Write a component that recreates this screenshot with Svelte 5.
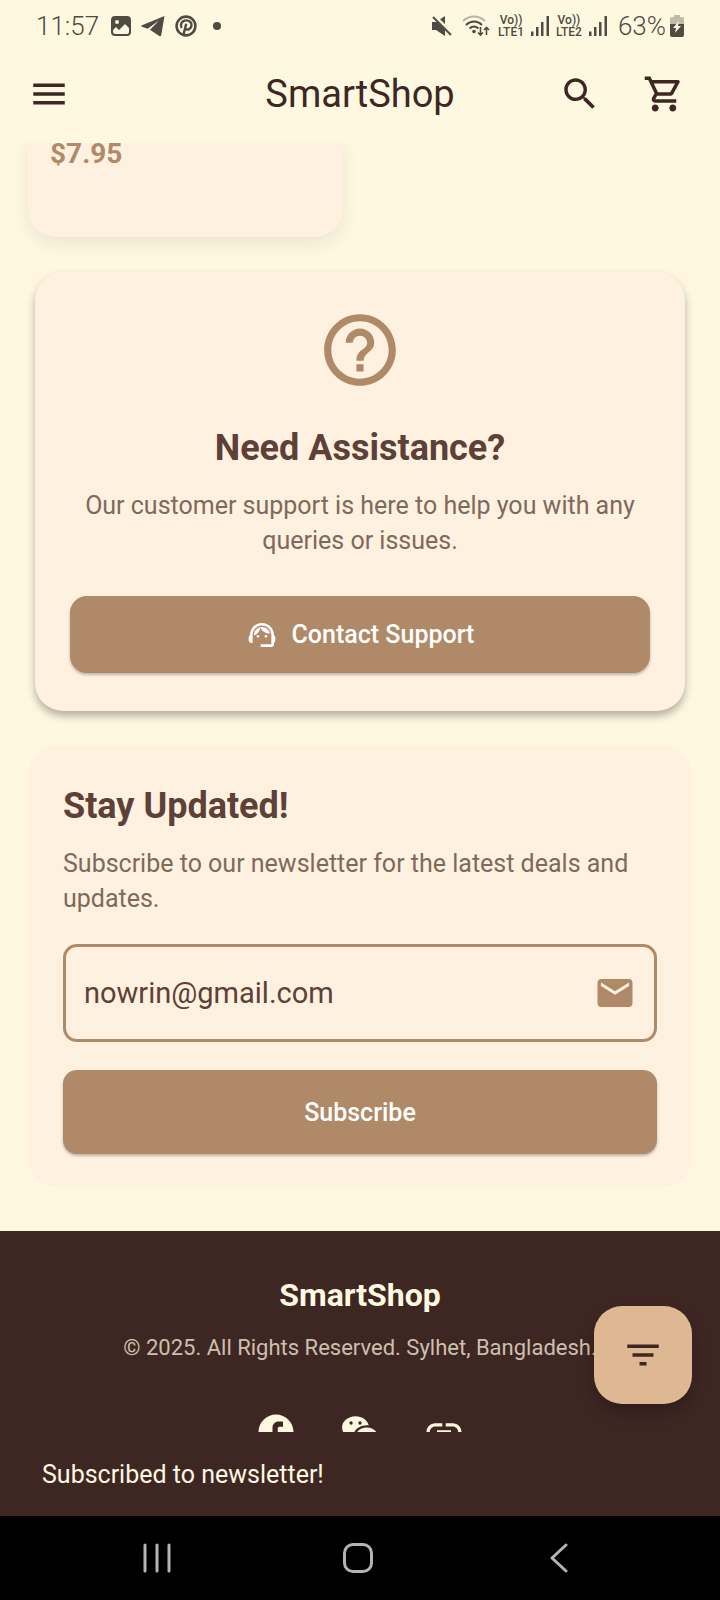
<script>
  let email = $state('nowrin@gmail.com');

  const socials = [
    {
      name: 'Facebook',
      path: 'M22 12c0-5.52-4.48-10-10-10S2 6.48 2 12c0 4.84 3.44 8.87 8 9.8V15H8v-3h2V9.5C10 7.57 11.57 6 13.5 6H16v3h-2c-.55 0-1 .45-1 1v2h3v3h-3v6.95c5.05-.5 9-4.76 9-9.95z'
    },
    {
      name: 'WeChat',
      path: 'M15.85 8.14c.39 0 .77.03 1.14.08C16.31 5.25 13.19 3 9.44 3c-4.25 0-7.7 2.88-7.7 6.43 0 2.05 1.15 3.86 2.94 5.04L3.67 16.5l2.76-1.19c.59.21 1.21.38 1.87.47-.09-.39-.14-.79-.14-1.21 0-3.55 3.45-6.43 7.69-6.43zM12 5.89a.96.96 0 1 1 0 1.93.96.96 0 0 1 0-1.93zM6.88 7.82a.96.96 0 1 1 0-1.93.96.96 0 0 1 0 1.93zM22.26 14.57c0-2.84-2.87-5.14-6.41-5.14s-6.41 2.3-6.41 5.14 2.87 5.14 6.41 5.14c.58 0 1.14-.08 1.67-.2l2.44.99-.96-1.53c1.56-.92 3.26-2.55 3.26-4.4z'
    },
    {
      name: 'Website link',
      path: 'M3.9 12c0-1.71 1.39-3.1 3.1-3.1h4V7H7c-2.76 0-5 2.24-5 5s2.24 5 5 5h4v-1.9H7c-1.71 0-3.1-1.39-3.1-3.1zM8 13h8v-2H8v2zm9-6h-4v1.9h4c1.71 0 3.1 1.39 3.1 3.1s-1.39 3.1-3.1 3.1h-4V17h4c2.76 0 5-2.24 5-5s-2.24-5-5-5z'
    }
  ];
</script>

{#snippet signal(label)}
  <span class="lte"><span>Vo))</span><span>{label}</span></span>
  <svg width="20" height="22" viewBox="0 0 20 22" aria-hidden="true">
    <path d="M1 16.500h2.500v4.500H1zM6 12h2.500v9H6zM11 7h2.500v14H11zM16.500 1H19v20h-2.500z" />
  </svg>
{/snippet}

<div class="app">
  <div class="status">
    <div class="status-group left">
      <span class="clock">11:57</span>
      <svg width="20" height="20" viewBox="0 0 20 20" aria-hidden="true">
        <path fill-rule="evenodd" d="M4 0h12a4 4 0 0 1 4 4v12a4 4 0 0 1-4 4H4a4 4 0 0 1-4-4V4a4 4 0 0 1 4-4zM2 14v2a2 2 0 0 0 2 2h12a2 2 0 0 0 2-2v-4l-4-4-6 6-3-3zM6 4a2 2 0 1 0 0 4 2 2 0 0 0 0-4z" />
      </svg>
      <svg width="24" height="22" viewBox="0 0 24 22" aria-hidden="true">
        <path d="M23.5 1 1 10.2c-1 .4-1 1.2 0 1.6l5.6 1.9L18 5.5l-9 9.3 9.3 6.3c.9.5 1.6.2 1.9-.8z" />
      </svg>
      <svg width="22" height="22" viewBox="0 0 22 22" aria-hidden="true">
        <circle cx="11" cy="11" r="9.4" fill="none" stroke="currentColor" stroke-width="2.6" />
        <path d="M6.6 12.8C4.7 9.6 6.8 5.4 11.3 5.4c3.4 0 5.4 2.1 5.2 4.9-.2 3.7-3.9 5.3-5.9 3.500M11.2 8.800 8.200 21" fill="none" stroke="currentColor" stroke-width="2.400" />
      </svg>
      <span class="dot"></span>
    </div>
    <div class="status-group right">
      <svg width="20" height="22" viewBox="0 0 20 22" aria-hidden="true">
        <path d="M0 7h4l9-6v20l-9-6H0z" />
        <path d="M1 0 20 19" stroke="#fff8e1" stroke-width="4" />
        <path d="M1 2 19 20" stroke="currentColor" stroke-width="2" />
      </svg>
      <svg class="wifi" width="28" height="22" viewBox="0 0 28 22" aria-hidden="true">
        <g fill="none" stroke="currentColor" stroke-width="2">
          <path d="M1 6c6.500-6 15.500-6 22 0" opacity=".4" />
          <path d="M4 10c4.800-4.600 11.200-4.600 16 0M7.500 13.500c2.800-2.500 6.200-2.500 9 0" />
          <path d="M18.500 12v8M16 17.500l2.500 2.500 2.500-2.500M24.500 20v-7M22 15l2.500-2.500L27 15" stroke-width="1.600" />
        </g>
        <circle cx="12" cy="16.500" r="1.800" />
      </svg>
      {@render signal('LTE1')}
      {@render signal('LTE2')}
      <span class="battery">
        63%
        <svg width="14" height="22" viewBox="0 0 14 22" aria-hidden="true">
          <path d="M4 0h6v2h2a2 2 0 0 1 2 2v7H0V4a2 2 0 0 1 2-2h2z" opacity=".35" />
          <path d="M0 9h14v11a2 2 0 0 1-2 2H2a2 2 0 0 1-2-2z" />
          <path d="M9 6 3 13h3l-1 5 6-7H8z" fill="#fff8e1" />
        </svg>
      </span>
    </div>
  </div>

  <header class="appbar">
    <button class="icon-btn" aria-label="Menu">
      <svg viewBox="0 0 24 24"><path d="M3 18h18v-2H3v2zm0-5h18v-2H3v2zm0-7v2h18V6H3z" /></svg>
    </button>
    <h1>SmartShop</h1>
    <div class="actions">
      <button class="icon-btn" aria-label="Search">
        <svg viewBox="0 0 24 24"><path d="M15.5 14h-.79l-.28-.27C15.41 12.59 16 11.11 16 9.5 16 5.91 13.09 3 9.5 3S3 5.91 3 9.5 5.91 16 9.5 16c1.61 0 3.09-.59 4.23-1.57l.27.28v.79l5 4.99L20.49 19l-4.99-5zm-6 0C7.01 14 5 11.99 5 9.5S7.01 5 9.5 5 14 7.01 14 9.5 11.99 14 9.5 14z" /></svg>
      </button>
      <button class="icon-btn" aria-label="Cart">
        <svg viewBox="0 0 24 24"><path d="M15.55 13c.75 0 1.41-.41 1.75-1.03l3.58-6.49c.37-.66-.11-1.48-.87-1.48H5.21l-.94-2H1v2h2l3.6 7.59-1.35 2.44C4.52 15.37 5.48 17 7 17h12v-2H7l1.1-2h7.45zM6.16 6h12.15l-2.76 5H8.53L6.16 6zM7 18c-1.1 0-1.99.9-1.99 2S5.9 22 7 22s2-.9 2-2-.9-2-2-2zm10 0c-1.1 0-1.99.9-1.99 2s.89 2 1.99 2 2-.9 2-2-.9-2-2-2z" /></svg>
      </button>
    </div>
  </header>

  <div class="viewport">
    <main>
      <div class="products">
        <article class="product"><p class="price">$7.95</p></article>
      </div>

      <section class="assist">
        <svg class="help" viewBox="0 0 24 24" aria-hidden="true"><path d="M11 18h2v-2h-2v2zm1-16C6.48 2 2 6.48 2 12s4.48 10 10 10 10-4.48 10-10S17.52 2 12 2zm0 18c-4.41 0-8-3.59-8-8s3.59-8 8-8 8 3.59 8 8-3.59 8-8 8zm0-14c-2.21 0-4 1.79-4 4h2c0-1.1.9-2 2-2s2 .9 2 2c0 2-3 1.75-3 5h2c0-2.25 3-2.5 3-5 0-2.21-1.79-4-4-4z" /></svg>
        <h2>Need Assistance?</h2>
        <p class="body">Our customer support is here to help you with any queries or issues.</p>
        <button class="primary support">
          <svg viewBox="0 0 24 24" aria-hidden="true">
            <path d="M21 12.22C21 6.73 16.74 3 12 3c-4.69 0-9 3.65-9 9.28-.6.34-1 .98-1 1.72v2c0 1.1.9 2 2 2h1v-6.1c0-3.87 3.13-7 7-7s7 3.13 7 7V19h-8v2h8c1.1 0 2-.9 2-2v-1.22c.59-.31 1-.92 1-1.64v-2.3c0-.7-.41-1.31-1-1.62z" />
            <circle cx="9" cy="13" r="1" /><circle cx="15" cy="13" r="1" />
            <path d="M18 11.03C17.52 8.18 15.04 6 12.05 6c-3.03 0-6.29 2.51-6.03 6.45 2.47-1.01 4.33-3.21 4.86-5.89 1.31 2.63 4 4.44 7.12 4.47z" />
          </svg>
          Contact Support
        </button>
      </section>

      <section class="newsletter">
        <h2>Stay Updated!</h2>
        <p class="body">Subscribe to our newsletter for the latest deals and updates.</p>
        <label class="field">
          <input type="email" aria-label="Email address" bind:value={email} />
          <svg viewBox="0 0 24 24" aria-hidden="true"><path d="M20 4H4c-1.1 0-1.99.9-1.99 2L2 18c0 1.1.9 2 2 2h16c1.1 0 2-.9 2-2V6c0-1.1-.9-2-2-2zm0 4l-8 5-8-5V6l8 5 8-5v2z" /></svg>
        </label>
        <button class="primary subscribe">Subscribe</button>
      </section>

      <footer>
        <h3>SmartShop</h3>
        <p>© 2025. All Rights Reserved. Sylhet, Bangladesh.</p>
        <div class="socials">
          {#each socials as s}
            <button class="icon-btn" aria-label={s.name}>
              <svg viewBox="0 0 24 24"><path fill-rule="evenodd" d={s.path} /></svg>
            </button>
          {/each}
        </div>
      </footer>
    </main>
    <button class="fab" aria-label="Filter">
      <svg viewBox="0 0 24 24"><path d="M10 18h4v-2h-4v2zM3 6v2h18V6H3zm3 7h12v-2H6v2z" /></svg>
    </button>
  </div>

  <div class="snackbar" role="status">Subscribed to newsletter!</div>

  <nav class="system">
    <button aria-label="Recent apps">
      <svg width="30" height="30" viewBox="0 0 30 30"><path d="M3 2v26M15 2v26M27 2v26" /></svg>
    </button>
    <button aria-label="Home">
      <svg width="32" height="32" viewBox="0 0 32 32"><rect x="2.5" y="2.5" width="27" height="27" rx="8.5" /></svg>
    </button>
    <button aria-label="Back">
      <svg width="30" height="30" viewBox="0 0 30 30"><path d="M22 2 8 15l14 13" /></svg>
    </button>
  </nav>
</div>

<style>
  :global(body) {
    margin: 0;
    background: #fff8e1;
  }
  .app {
    --cream: #fff8e1;
    --card: #fff1df;
    --tan: #b08968;
    --dark: #3e2723;
    --brown: #5d4037;
    display: flex;
    flex-direction: column;
    height: 100vh;
    background: var(--cream);
    font-family: Roboto, sans-serif;
    font-size: 25px;
    line-height: 35px;
  }
  h1, h2, h3, p {
    margin: 0;
  }
  button {
    padding: 0;
    border: 0;
    background: none;
    color: inherit;
    font: inherit;
  }
  svg {
    display: block;
    flex: none;
    fill: currentColor;
  }

  .status {
    display: flex;
    justify-content: space-between;
    height: 38px;
    padding: 7px 36px 0;
    color: #4e4b42;
  }
  .status-group {
    display: flex;
    align-items: center;
    font-size: 26px;
    font-weight: 300;
  }
  .left {
    gap: 10px;
  }
  .right {
    gap: 6px;
  }
  .wifi {
    margin: 0 2px 0 4px;
  }
  .clock {
    margin-right: 2px;
  }
  .dot {
    width: 8px;
    height: 8px;
    margin-left: 6px;
    border-radius: 50%;
    background: currentColor;
  }
  .lte {
    display: flex;
    flex-direction: column;
    align-items: center;
    font-size: 12px;
    font-weight: 500;
    line-height: 12px;
  }
  .battery {
    display: flex;
    align-items: center;
    gap: 4px;
    margin-left: 4px;
  }

  .appbar {
    display: grid;
    grid-template-columns: 1fr auto 1fr;
    align-items: center;
    height: 98px;
    padding: 0 28px;
    color: var(--dark);
  }
  h1 {
    font-size: 38px;
    font-weight: 400;
  }
  .icon-btn {
    width: 42px;
    height: 42px;
  }
  .icon-btn svg, .field svg, .fab svg {
    width: 42px;
    height: 42px;
  }
  .actions {
    display: flex;
    justify-content: flex-end;
    gap: 42px;
    padding-right: 7px;
  }

  .viewport {
    position: relative;
    flex: 1;
    min-height: 0;
    overflow: hidden;
  }
  main {
    height: 100%;
    overflow: hidden;
  }
  .products {
    display: grid;
    grid-template-columns: 1fr 1fr;
    gap: 35px;
    margin: -7px 28px 35px;
  }
  .product {
    padding: 0 22px 66px;
    border-radius: 0 0 28px 28px;
    background: var(--card);
    box-shadow: 0 7px 18px rgba(0, 0, 0, 0.08);
  }
  .price {
    color: var(--tan);
    font-size: 28px;
    font-weight: 700;
  }
  section {
    border-radius: 28px;
    background: var(--card);
  }
  h2 {
    color: var(--brown);
    font-size: 36px;
    font-weight: 700;
    line-height: 42px;
  }
  .body {
    color: #7e695c;
  }
  .primary {
    display: flex;
    align-items: center;
    justify-content: center;
    width: 100%;
    background: var(--tan);
    color: #fff;
    font-weight: 500;
    box-shadow: 0 2px 3px rgba(0, 0, 0, 0.25);
  }
  .assist {
    margin: 0 35px 35px;
    padding: 35px 35px 38px;
    text-align: center;
    box-shadow: 0 5px 9px rgba(0, 0, 0, 0.3);
  }
  .help {
    width: 86px;
    height: 86px;
    margin: 0 auto 34px;
    color: var(--tan);
  }
  .assist h2, .newsletter h2 {
    margin-bottom: 19px;
  }
  .support {
    gap: 14px;
    height: 77px;
    margin-top: 38px;
    border-radius: 17px;
  }
  .support svg {
    width: 32px;
    height: 32px;
  }
  .newsletter {
    margin: 0 28px 44px;
    padding: 39px 35px 33px;
  }
  .field {
    display: flex;
    align-items: center;
    gap: 14px;
    box-sizing: border-box;
    height: 98px;
    margin: 28px 0;
    padding: 0 18px;
    border: 3px solid var(--tan);
    border-radius: 14px;
    color: var(--tan);
  }
  input {
    flex: 1;
    min-width: 0;
    padding: 0;
    border: 0;
    outline: 0;
    background: none;
    color: var(--brown);
    font: inherit;
    font-size: 29px;
  }
  .subscribe {
    height: 84px;
    border-radius: 14px;
  }

  footer {
    padding: 47px 28px;
    background: var(--dark);
    color: var(--cream);
    text-align: center;
  }
  h3 {
    font-size: 32px;
    font-weight: 700;
  }
  footer p {
    margin: 17px 0 46px;
    color: #cdbfae;
    font-size: 22px;
  }
  .socials {
    display: flex;
    justify-content: center;
    gap: 42px;
  }
  .fab {
    position: absolute;
    right: 28px;
    bottom: 28px;
    display: grid;
    place-items: center;
    width: 98px;
    height: 98px;
    border-radius: 28px;
    background: #ddb892;
    color: var(--dark);
    box-shadow: 0 8px 16px rgba(0, 0, 0, 0.25);
  }
  .snackbar {
    padding: 25px 42px 24px;
    background: var(--dark);
    color: var(--cream);
  }
  .system {
    display: grid;
    grid-template-columns: repeat(3, 1fr);
    height: 84px;
    padding: 0 60px 0 56px;
    background: #000;
    color: #b4b4b4;
  }
  .system button {
    display: grid;
    place-items: center;
  }
  .system svg {
    fill: none;
    stroke: currentColor;
    stroke-width: 3;
    stroke-linecap: round;
    stroke-linejoin: round;
  }
</style>
